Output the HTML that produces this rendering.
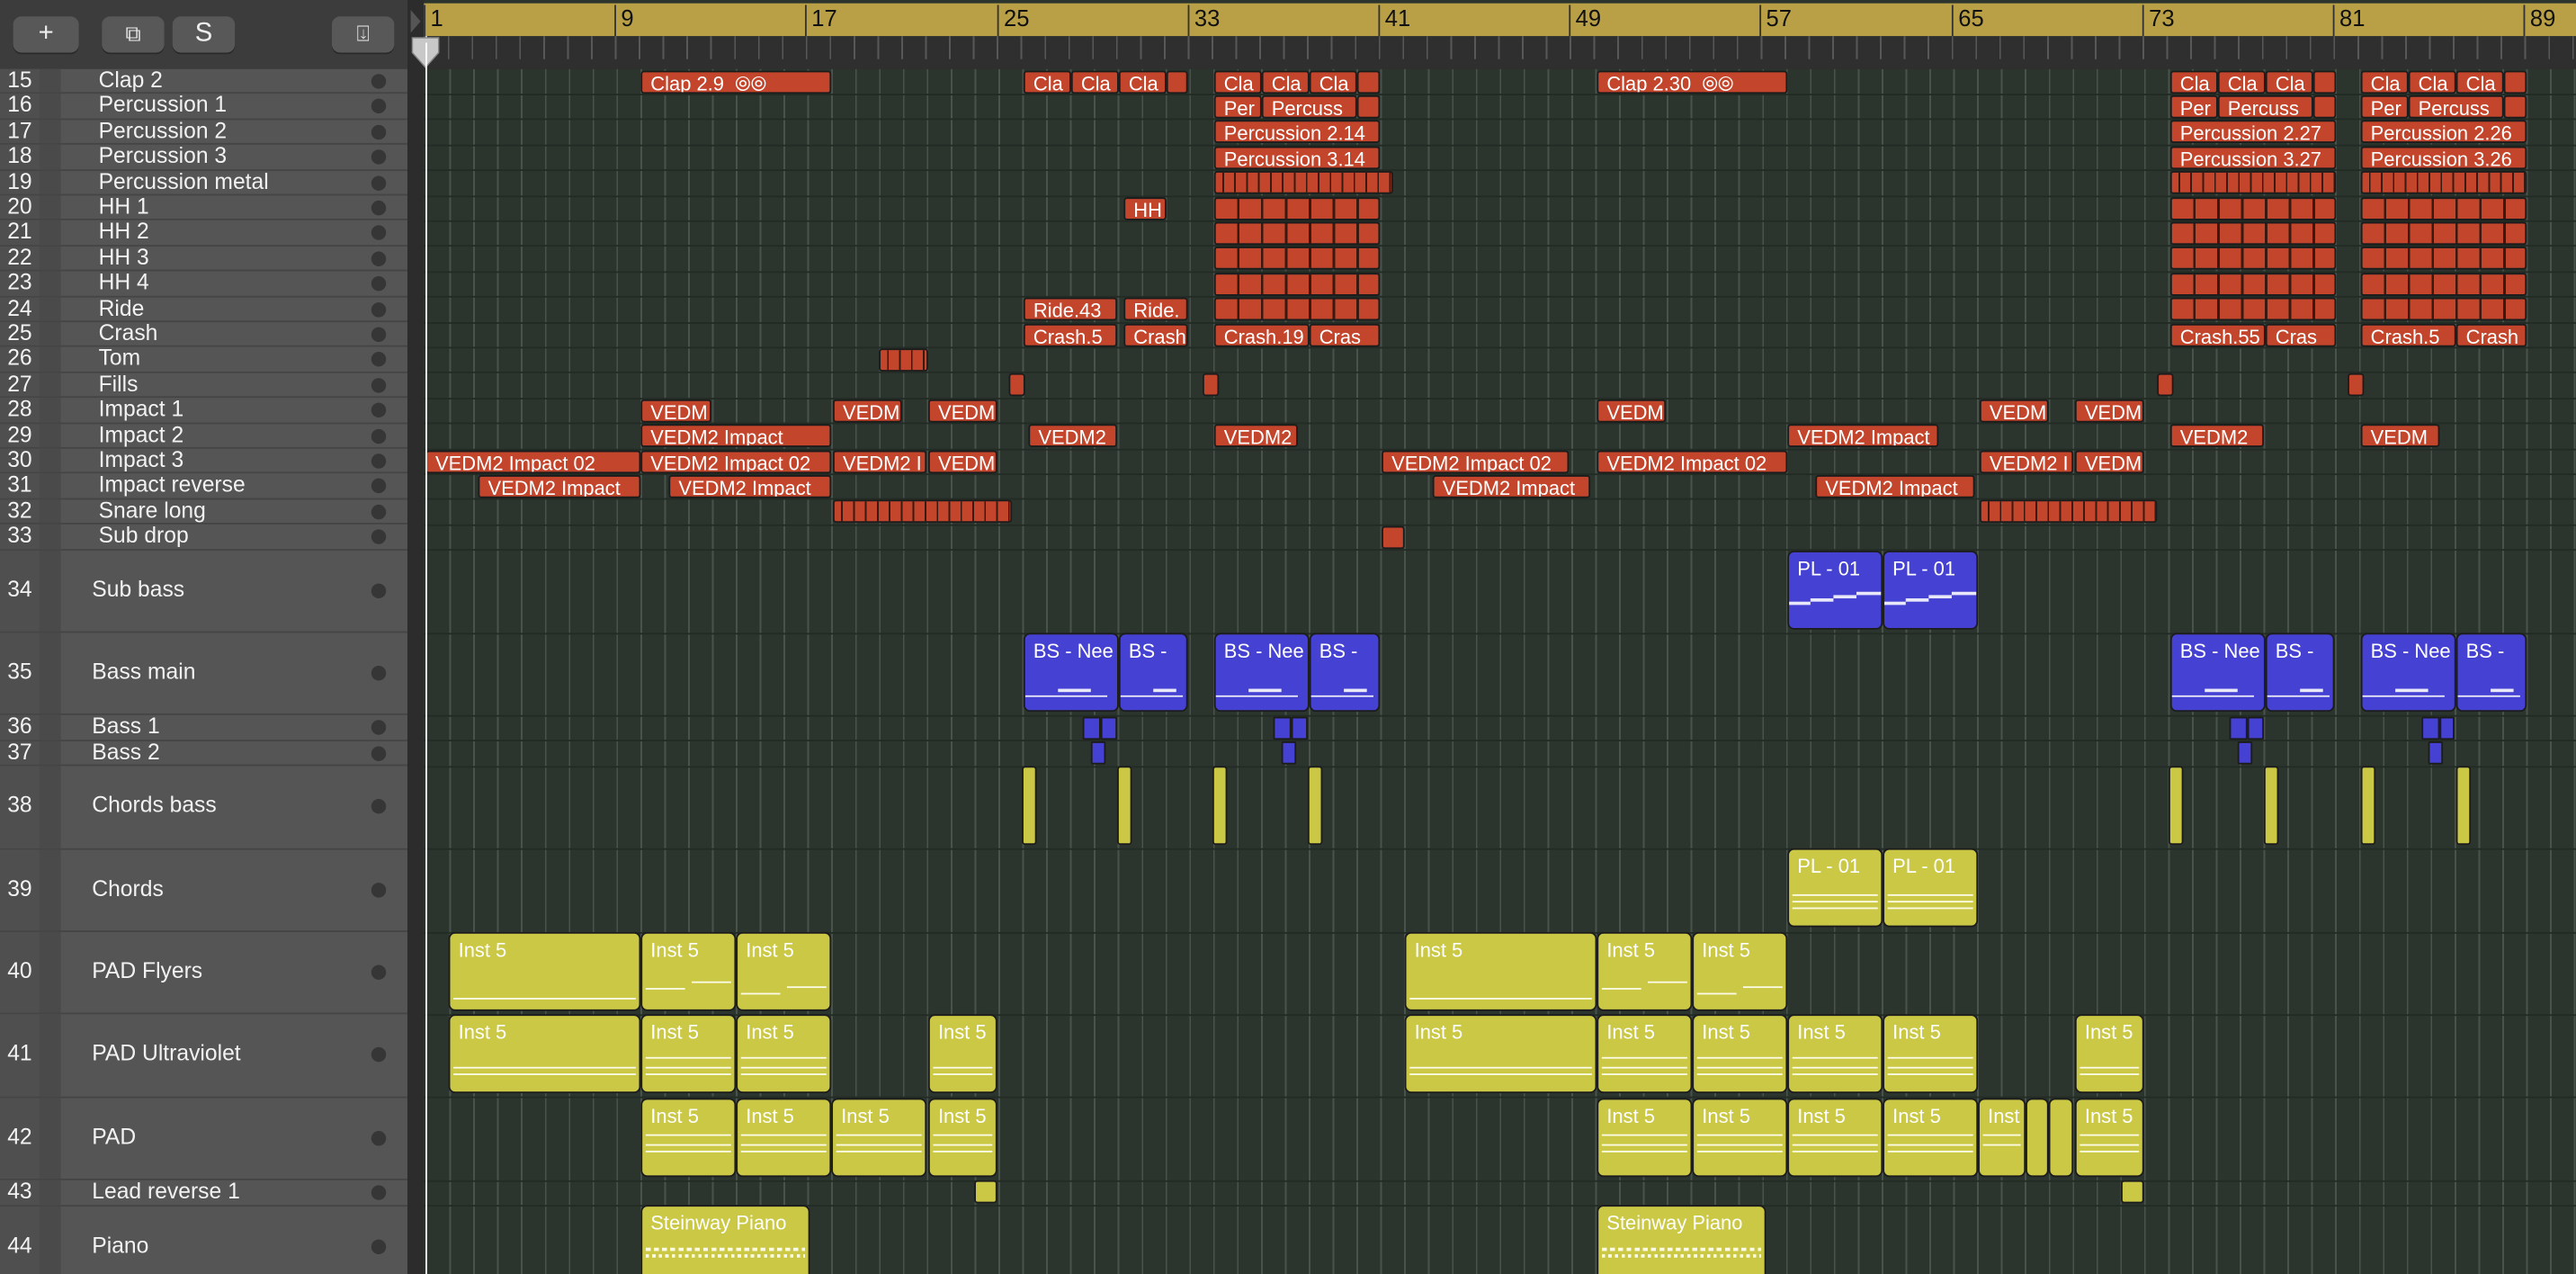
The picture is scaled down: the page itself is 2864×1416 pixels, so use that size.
<!DOCTYPE html>
<html><head><meta charset="utf-8">
<style>
html,body{margin:0;padding:0;background:#2b352e;overflow:hidden}
#w{position:absolute;left:0;top:0;width:1568px;height:775px;transform:scale(1.82653,1.8271);transform-origin:0 0;font-family:"Liberation Sans",sans-serif;overflow:hidden;background:#2b352e}
.a{position:absolute}
.hdr{left:0;top:0;width:258px;height:42px;background:#3c3c3c}
.btn{position:absolute;top:10px;height:22px;background:#585858;border-radius:5px;color:#eee;text-align:center;font-size:16px;line-height:22px;box-shadow:0 1px 0 #2a2a2a}
.gold{left:258px;top:2px;width:1310px;height:20px;background:#b99f45}
.gold span{position:absolute;top:1px;font-size:14px;color:#111;padding-left:3px;border-left:1px solid #333;height:19px;line-height:17px}
.tick{left:258px;top:22px;width:1310px;height:20px;background:#2f2f2f repeating-linear-gradient(90deg,#585858 0 1px,transparent 1px 14.53px);background-size:100% 14px;background-repeat:no-repeat}
.grid{left:258.7px;top:42px;width:1310px;height:740px;background:repeating-linear-gradient(90deg,#48534b 0 1px,transparent 1px 14.53px)}
.tl{left:0;top:42px;width:248px;height:740px;background:#555}
.strip{left:248px;top:0;width:10px;height:775px;background:#2c2c2c}
.row{position:absolute;left:0;width:248px;border-bottom:1px solid #454545;box-sizing:border-box;color:#f2f2f2;font-size:13.5px}
.row .n{position:absolute;left:0;top:0;bottom:0;width:24px;background:#4f4f4f;text-align:center}
.row .g{position:absolute;left:24px;top:0;bottom:0;width:13px;background:#4a4a4a}
.row .t{position:absolute;left:56px}
.row .d{position:absolute;left:226px;width:9px;height:9px;border-radius:50%;background:#363636}
.sep{position:absolute;left:258px;width:1310px;height:1px;background:#222b24}
.r{position:absolute;box-sizing:border-box;border:1px solid #1c1c1c;border-radius:2px;color:#fff;font-size:12px;line-height:12px;padding:1px 0 0 5px;white-space:nowrap;overflow:hidden}
.o{background:#c3452b}
.b{background:#4541d3;border-radius:4px}
.y{background:#cbc845;border-radius:4px}
.s{height:14px}
.L{height:48px;padding-top:4px}
.st{background:#c3452b repeating-linear-gradient(90deg,#c3452b 0 4px,#3a1a10 4px 5px,#c3452b 5px 7.26px)}
.sq{background:repeating-linear-gradient(90deg,#c3452b 0 13px,#3a1a10 13px 14.53px)}
.ml{position:absolute;height:2px;background:#e8e8f8}
.yl{position:absolute;height:2px;background:#fbfbe6;left:2px;right:2px}
</style></head><body><div id="w">
<div class="a grid"></div>
<div class="a hdr"></div>
<div class="btn" style="left:8px;width:40px">+</div>
<div class="btn" style="left:62px;width:38px;font-size:13px">⧉</div>
<div class="btn" style="left:105px;width:38px">S</div>
<div class="btn" style="left:202px;width:38px;font-size:13px">⍗</div>
<div class="a strip"></div>
<div class="a gold">
<span style="left:0">1</span><span style="left:116px">9</span><span style="left:232px">17</span><span style="left:349px">25</span><span style="left:465px">33</span><span style="left:581px">41</span><span style="left:697px">49</span><span style="left:813px">57</span><span style="left:930px">65</span><span style="left:1046px">73</span><span style="left:1162px">81</span><span style="left:1278px">89</span>
</div>
<div class="a tick"></div>
<div class="a tl"></div>

<!-- track list -->
<div class="row" style="top:42px;height:15.4px;line-height:14px"><div class="n">15</div><div class="g"></div><div class="t" style="left:60px">Clap 2</div><div class="d" style="top:3px"></div></div>
<div class="row" style="top:57.4px;height:15.4px;line-height:14px"><div class="n">16</div><div class="g"></div><div class="t" style="left:60px">Percussion 1</div><div class="d" style="top:3px"></div></div>
<div class="row" style="top:72.8px;height:15.4px;line-height:14px"><div class="n">17</div><div class="g"></div><div class="t" style="left:60px">Percussion 2</div><div class="d" style="top:3px"></div></div>
<div class="row" style="top:88.2px;height:15.4px;line-height:14px"><div class="n">18</div><div class="g"></div><div class="t" style="left:60px">Percussion 3</div><div class="d" style="top:3px"></div></div>
<div class="row" style="top:103.6px;height:15.4px;line-height:14px"><div class="n">19</div><div class="g"></div><div class="t" style="left:60px">Percussion metal</div><div class="d" style="top:3px"></div></div>
<div class="row" style="top:119px;height:15.4px;line-height:14px"><div class="n">20</div><div class="g"></div><div class="t" style="left:60px">HH 1</div><div class="d" style="top:3px"></div></div>
<div class="row" style="top:134.4px;height:15.4px;line-height:14px"><div class="n">21</div><div class="g"></div><div class="t" style="left:60px">HH 2</div><div class="d" style="top:3px"></div></div>
<div class="row" style="top:149.8px;height:15.4px;line-height:14px"><div class="n">22</div><div class="g"></div><div class="t" style="left:60px">HH 3</div><div class="d" style="top:3px"></div></div>
<div class="row" style="top:165.2px;height:15.4px;line-height:14px"><div class="n">23</div><div class="g"></div><div class="t" style="left:60px">HH 4</div><div class="d" style="top:3px"></div></div>
<div class="row" style="top:180.6px;height:15.4px;line-height:14px"><div class="n">24</div><div class="g"></div><div class="t" style="left:60px">Ride</div><div class="d" style="top:3px"></div></div>
<div class="row" style="top:196px;height:15.4px;line-height:14px"><div class="n">25</div><div class="g"></div><div class="t" style="left:60px">Crash</div><div class="d" style="top:3px"></div></div>
<div class="row" style="top:211.4px;height:15.4px;line-height:14px"><div class="n">26</div><div class="g"></div><div class="t" style="left:60px">Tom</div><div class="d" style="top:3px"></div></div>
<div class="row" style="top:226.8px;height:15.4px;line-height:14px"><div class="n">27</div><div class="g"></div><div class="t" style="left:60px">Fills</div><div class="d" style="top:3px"></div></div>
<div class="row" style="top:242.2px;height:15.4px;line-height:14px"><div class="n">28</div><div class="g"></div><div class="t" style="left:60px">Impact 1</div><div class="d" style="top:3px"></div></div>
<div class="row" style="top:257.6px;height:15.4px;line-height:14px"><div class="n">29</div><div class="g"></div><div class="t" style="left:60px">Impact 2</div><div class="d" style="top:3px"></div></div>
<div class="row" style="top:273px;height:15.4px;line-height:14px"><div class="n">30</div><div class="g"></div><div class="t" style="left:60px">Impact 3</div><div class="d" style="top:3px"></div></div>
<div class="row" style="top:288.4px;height:15.4px;line-height:14px"><div class="n">31</div><div class="g"></div><div class="t" style="left:60px">Impact reverse</div><div class="d" style="top:3px"></div></div>
<div class="row" style="top:303.8px;height:15.4px;line-height:14px"><div class="n">32</div><div class="g"></div><div class="t" style="left:60px">Snare long</div><div class="d" style="top:3px"></div></div>
<div class="row" style="top:319.2px;height:15.4px;line-height:14px"><div class="n">33</div><div class="g"></div><div class="t" style="left:60px">Sub drop</div><div class="d" style="top:3px"></div></div>
<div class="row" style="top:334.6px;height:50.4px;line-height:48px"><div class="n">34</div><div class="g"></div><div class="t">Sub bass</div><div class="d" style="top:20px"></div></div>
<div class="row" style="top:385px;height:50.4px;line-height:48px"><div class="n">35</div><div class="g"></div><div class="t">Bass main</div><div class="d" style="top:20px"></div></div>
<div class="row" style="top:435.4px;height:15.4px;line-height:14px"><div class="n">36</div><div class="g"></div><div class="t">Bass 1</div><div class="d" style="top:3px"></div></div>
<div class="row" style="top:450.8px;height:15.4px;line-height:14px"><div class="n">37</div><div class="g"></div><div class="t">Bass 2</div><div class="d" style="top:3px"></div></div>
<div class="row" style="top:466.2px;height:50.4px;line-height:48px"><div class="n">38</div><div class="g"></div><div class="t">Chords bass</div><div class="d" style="top:20px"></div></div>
<div class="row" style="top:516.6px;height:50.4px;line-height:48px"><div class="n">39</div><div class="g"></div><div class="t">Chords</div><div class="d" style="top:20px"></div></div>
<div class="row" style="top:567px;height:50.4px;line-height:48px"><div class="n">40</div><div class="g"></div><div class="t">PAD Flyers</div><div class="d" style="top:20px"></div></div>
<div class="row" style="top:617.4px;height:50.4px;line-height:48px"><div class="n">41</div><div class="g"></div><div class="t">PAD Ultraviolet</div><div class="d" style="top:20px"></div></div>
<div class="row" style="top:667.8px;height:50.4px;line-height:48px"><div class="n">42</div><div class="g"></div><div class="t">PAD</div><div class="d" style="top:20px"></div></div>
<div class="row" style="top:718.2px;height:15.4px;line-height:14px"><div class="n">43</div><div class="g"></div><div class="t">Lead reverse 1</div><div class="d" style="top:3px"></div></div>
<div class="row" style="top:733.6px;height:50.4px;line-height:48px"><div class="n">44</div><div class="g"></div><div class="t">Piano</div><div class="d" style="top:20px"></div></div>

<!-- row separators in arrange -->
<div class="sep" style="top:57px"></div><div class="sep" style="top:72.4px"></div><div class="sep" style="top:87.8px"></div><div class="sep" style="top:103.2px"></div><div class="sep" style="top:118.6px"></div><div class="sep" style="top:134px"></div><div class="sep" style="top:149.4px"></div><div class="sep" style="top:164.8px"></div><div class="sep" style="top:180.2px"></div><div class="sep" style="top:195.6px"></div><div class="sep" style="top:211px"></div><div class="sep" style="top:226.4px"></div><div class="sep" style="top:241.8px"></div><div class="sep" style="top:257.2px"></div><div class="sep" style="top:272.6px"></div><div class="sep" style="top:288px"></div><div class="sep" style="top:303.4px"></div><div class="sep" style="top:318.8px"></div><div class="sep" style="top:334.2px"></div><div class="sep" style="top:384.6px"></div><div class="sep" style="top:435px"></div><div class="sep" style="top:450.4px"></div><div class="sep" style="top:465.8px"></div><div class="sep" style="top:516.2px"></div><div class="sep" style="top:566.6px"></div><div class="sep" style="top:617px"></div><div class="sep" style="top:667.4px"></div><div class="sep" style="top:717.8px"></div><div class="sep" style="top:733.2px"></div>

<!-- row 15 -->
<div class="r o s" style="left:390px;top:42.5px;width:116px">Clap 2.9 &nbsp;⦾⦾</div>
<div class="r o s" style="left:623px;top:42.5px;width:29px">Cla</div><div class="r o s" style="left:652px;top:42.5px;width:29px">Cla</div><div class="r o s" style="left:681px;top:42.5px;width:29px">Cla</div><div class="r o s" style="left:710px;top:42.5px;width:13px"></div>
<div class="r o s" style="left:739px;top:42.5px;width:29px">Cla</div><div class="r o s" style="left:768px;top:42.5px;width:29px">Cla</div><div class="r o s" style="left:797px;top:42.5px;width:29px">Cla</div><div class="r o s" style="left:826px;top:42.5px;width:14px"></div>
<div class="r o s" style="left:972px;top:42.5px;width:116px">Clap 2.30 &nbsp;⦾⦾</div>
<div class="r o s" style="left:1321px;top:42.5px;width:29px">Cla</div><div class="r o s" style="left:1350px;top:42.5px;width:29px">Cla</div><div class="r o s" style="left:1379px;top:42.5px;width:29px">Cla</div><div class="r o s" style="left:1408px;top:42.5px;width:14px"></div>
<div class="r o s" style="left:1437px;top:42.5px;width:29px">Cla</div><div class="r o s" style="left:1466px;top:42.5px;width:29px">Cla</div><div class="r o s" style="left:1495px;top:42.5px;width:29px">Cla</div><div class="r o s" style="left:1524px;top:42.5px;width:14px"></div>
<!-- row 16 -->
<div class="r o s" style="left:739px;top:58px;width:29px">Per</div><div class="r o s" style="left:768px;top:58px;width:58px">Percuss</div><div class="r o s" style="left:826px;top:58px;width:14px"></div>
<div class="r o s" style="left:1321px;top:58px;width:29px">Per</div><div class="r o s" style="left:1350px;top:58px;width:58px">Percuss</div><div class="r o s" style="left:1408px;top:58px;width:14px"></div>
<div class="r o s" style="left:1437px;top:58px;width:29px">Per</div><div class="r o s" style="left:1466px;top:58px;width:58px">Percuss</div><div class="r o s" style="left:1524px;top:58px;width:14px"></div>
<!-- row 17/18 -->
<div class="r o s" style="left:739px;top:73.4px;width:101px">Percussion 2.14</div><div class="r o s" style="left:1321px;top:73.4px;width:101px">Percussion 2.27</div><div class="r o s" style="left:1437px;top:73.4px;width:101px">Percussion 2.26</div>
<div class="r o s" style="left:739px;top:88.8px;width:101px">Percussion 3.14</div><div class="r o s" style="left:1321px;top:88.8px;width:101px">Percussion 3.27</div><div class="r o s" style="left:1437px;top:88.8px;width:101px">Percussion 3.26</div>
<!-- row 19 -->
<div class="r st s" style="left:739px;top:104.2px;width:109px"></div><div class="r st s" style="left:1321px;top:104.2px;width:101px"></div><div class="r st s" style="left:1437px;top:104.2px;width:101px"></div>
<!-- row 20-24 squares -->
<div class="r o s" style="left:684px;top:119.6px;width:26px">HH</div>
<div class="r sq s" style="left:739px;top:119.6px;width:101px"></div><div class="r sq s" style="left:1321px;top:119.6px;width:101px"></div><div class="r sq s" style="left:1437px;top:119.6px;width:101px"></div>
<div class="r sq s" style="left:739px;top:135px;width:101px"></div><div class="r sq s" style="left:1321px;top:135px;width:101px"></div><div class="r sq s" style="left:1437px;top:135px;width:101px"></div>
<div class="r sq s" style="left:739px;top:150.4px;width:101px"></div><div class="r sq s" style="left:1321px;top:150.4px;width:101px"></div><div class="r sq s" style="left:1437px;top:150.4px;width:101px"></div>
<div class="r sq s" style="left:739px;top:165.8px;width:101px"></div><div class="r sq s" style="left:1321px;top:165.8px;width:101px"></div><div class="r sq s" style="left:1437px;top:165.8px;width:101px"></div>
<div class="r o s" style="left:623px;top:181.2px;width:57px">Ride.43</div><div class="r o s" style="left:684px;top:181.2px;width:39px">Ride.</div>
<div class="r sq s" style="left:739px;top:181.2px;width:101px"></div><div class="r sq s" style="left:1321px;top:181.2px;width:101px"></div><div class="r sq s" style="left:1437px;top:181.2px;width:101px"></div>
<!-- row 25 -->
<div class="r o s" style="left:623px;top:196.6px;width:57px">Crash.5</div><div class="r o s" style="left:684px;top:196.6px;width:39px">Crash</div>
<div class="r o s" style="left:739px;top:196.6px;width:58px">Crash.19</div><div class="r o s" style="left:797px;top:196.6px;width:43px">Cras</div>
<div class="r o s" style="left:1321px;top:196.6px;width:58px">Crash.55</div><div class="r o s" style="left:1379px;top:196.6px;width:43px">Cras</div>
<div class="r o s" style="left:1437px;top:196.6px;width:58px">Crash.5</div><div class="r o s" style="left:1495px;top:196.6px;width:43px">Crash</div>
<!-- row 26/27 -->
<div class="r st s" style="left:535px;top:212px;width:30px"></div>
<div class="r o s" style="left:614px;top:227.4px;width:10px"></div><div class="r o s" style="left:732px;top:227.4px;width:10px"></div><div class="r o s" style="left:1313px;top:227.4px;width:10px"></div><div class="r o s" style="left:1429px;top:227.4px;width:10px"></div>
<!-- row 28 -->
<div class="r o s" style="left:390px;top:242.8px;width:43px">VEDM</div><div class="r o s" style="left:507px;top:242.8px;width:42px">VEDM</div><div class="r o s" style="left:565px;top:242.8px;width:42px">VEDM</div><div class="r o s" style="left:972px;top:242.8px;width:42px">VEDM</div><div class="r o s" style="left:1205px;top:242.8px;width:42px">VEDM</div><div class="r o s" style="left:1263px;top:242.8px;width:42px">VEDM</div>
<!-- row 29 -->
<div class="r o s" style="left:390px;top:258.2px;width:116px">VEDM2 Impact</div><div class="r o s" style="left:626px;top:258.2px;width:54px">VEDM2</div><div class="r o s" style="left:739px;top:258.2px;width:51px">VEDM2</div><div class="r o s" style="left:1088px;top:258.2px;width:92px">VEDM2 Impact</div><div class="r o s" style="left:1321px;top:258.2px;width:57px">VEDM2</div><div class="r o s" style="left:1437px;top:258.2px;width:48px">VEDM</div>
<!-- row 30 -->
<div class="r o s" style="left:259px;top:273.6px;width:131px">VEDM2 Impact 02</div><div class="r o s" style="left:390px;top:273.6px;width:116px">VEDM2 Impact 02</div><div class="r o s" style="left:507px;top:273.6px;width:57px">VEDM2 I</div><div class="r o s" style="left:565px;top:273.6px;width:42px">VEDM</div><div class="r o s" style="left:841px;top:273.6px;width:114px">VEDM2 Impact 02</div><div class="r o s" style="left:972px;top:273.6px;width:116px">VEDM2 Impact 02</div><div class="r o s" style="left:1205px;top:273.6px;width:57px">VEDM2 I</div><div class="r o s" style="left:1263px;top:273.6px;width:42px">VEDM</div>
<!-- row 31 -->
<div class="r o s" style="left:291px;top:289px;width:99px">VEDM2 Impact</div><div class="r o s" style="left:407px;top:289px;width:99px">VEDM2 Impact</div><div class="r o s" style="left:872px;top:289px;width:96px">VEDM2 Impact</div><div class="r o s" style="left:1105px;top:289px;width:97px">VEDM2 Impact</div>
<!-- row 32/33 -->
<div class="r st s" style="left:507px;top:304.4px;width:109px"></div><div class="r st s" style="left:1205px;top:304.4px;width:108px"></div>
<div class="r o s" style="left:841px;top:319.8px;width:14px"></div>

<!-- row 34 -->
<div class="r b L" style="left:1088px;top:335px;width:58px">PL - 01<div class="ml" style="left:0;top:30px;width:13px"></div><div class="ml" style="left:13px;top:28px;width:14px"></div><div class="ml" style="left:27px;top:26px;width:14px"></div><div class="ml" style="left:41px;top:24px;width:15px"></div></div>
<div class="r b L" style="left:1146px;top:335px;width:58px">PL - 01<div class="ml" style="left:0;top:30px;width:13px"></div><div class="ml" style="left:13px;top:28px;width:14px"></div><div class="ml" style="left:27px;top:26px;width:14px"></div><div class="ml" style="left:41px;top:24px;width:15px"></div></div>
<!-- row 35 -->
<div class="r b L" style="left:623px;top:385.4px;width:58px">BS - Nee<div class="ml" style="left:0;top:37px;width:50px;height:1px"></div><div class="ml" style="left:20px;top:33px;width:20px;height:2px"></div></div>
<div class="r b L" style="left:681px;top:385.4px;width:42px">BS -<div class="ml" style="left:0;top:37px;width:38px;height:1px"></div><div class="ml" style="left:20px;top:33px;width:14px"></div></div>
<div class="r b L" style="left:739px;top:385.4px;width:58px">BS - Nee<div class="ml" style="left:0;top:37px;width:50px;height:1px"></div><div class="ml" style="left:20px;top:33px;width:20px"></div></div>
<div class="r b L" style="left:797px;top:385.4px;width:43px">BS -<div class="ml" style="left:0;top:37px;width:38px;height:1px"></div><div class="ml" style="left:20px;top:33px;width:14px"></div></div>
<div class="r b L" style="left:1321px;top:385.4px;width:58px">BS - Nee<div class="ml" style="left:0;top:37px;width:50px;height:1px"></div><div class="ml" style="left:20px;top:33px;width:20px"></div></div>
<div class="r b L" style="left:1379px;top:385.4px;width:42px">BS -<div class="ml" style="left:0;top:37px;width:38px;height:1px"></div><div class="ml" style="left:20px;top:33px;width:14px"></div></div>
<div class="r b L" style="left:1437px;top:385.4px;width:58px">BS - Nee<div class="ml" style="left:0;top:37px;width:50px;height:1px"></div><div class="ml" style="left:20px;top:33px;width:20px"></div></div>
<div class="r b L" style="left:1495px;top:385.4px;width:43px">BS -<div class="ml" style="left:0;top:37px;width:38px;height:1px"></div><div class="ml" style="left:20px;top:33px;width:14px"></div></div>
<!-- row 36/37 -->
<div class="r b s" style="left:659px;top:435.6px;width:11px;border-radius:1px"></div><div class="r b s" style="left:670px;top:435.6px;width:10px;border-radius:1px"></div>
<div class="r b s" style="left:775px;top:435.6px;width:11px;border-radius:1px"></div><div class="r b s" style="left:786px;top:435.6px;width:10px;border-radius:1px"></div>
<div class="r b s" style="left:1357px;top:435.6px;width:11px;border-radius:1px"></div><div class="r b s" style="left:1368px;top:435.6px;width:10px;border-radius:1px"></div>
<div class="r b s" style="left:1474px;top:435.6px;width:11px;border-radius:1px"></div><div class="r b s" style="left:1485px;top:435.6px;width:9px;border-radius:1px"></div>
<div class="r b s" style="left:664px;top:451px;width:9px;border-radius:1px"></div><div class="r b s" style="left:780px;top:451px;width:9px;border-radius:1px"></div><div class="r b s" style="left:1362px;top:451px;width:9px;border-radius:1px"></div><div class="r b s" style="left:1478px;top:451px;width:9px;border-radius:1px"></div>
<!-- row 38 -->
<div class="r y L" style="left:622px;top:465.5px;width:9px;border-radius:2px"></div><div class="r y L" style="left:680px;top:465.5px;width:9px;border-radius:2px"></div><div class="r y L" style="left:738px;top:465.5px;width:9px;border-radius:2px"></div><div class="r y L" style="left:796px;top:465.5px;width:9px;border-radius:2px"></div>
<div class="r y L" style="left:1320px;top:465.5px;width:9px;border-radius:2px"></div><div class="r y L" style="left:1378px;top:465.5px;width:9px;border-radius:2px"></div><div class="r y L" style="left:1437px;top:465.5px;width:9px;border-radius:2px"></div><div class="r y L" style="left:1495px;top:465.5px;width:9px;border-radius:2px"></div>
<!-- row 39 -->
<div class="r y L" style="left:1088px;top:516.4px;width:58px">PL - 01<div class="yl" style="top:27px;height:1px"></div><div class="yl" style="top:31px;height:1px"></div><div class="yl" style="top:35px;height:1px"></div></div>
<div class="r y L" style="left:1146px;top:516.4px;width:58px">PL - 01<div class="yl" style="top:27px;height:1px"></div><div class="yl" style="top:31px;height:1px"></div><div class="yl" style="top:35px;height:1px"></div></div>
<!-- row 40 -->
<div class="r y L" style="left:273px;top:566.8px;width:117px">Inst 5<div class="yl" style="top:39px;height:1px"></div></div>
<div class="r y L" style="left:390px;top:566.8px;width:58px">Inst 5<div class="yl" style="top:33px;height:1px;right:30px"></div><div class="yl" style="top:29px;height:1px;left:30px"></div></div>
<div class="r y L" style="left:448px;top:566.8px;width:58px">Inst 5<div class="yl" style="top:36px;height:1px;right:30px"></div><div class="yl" style="top:32px;height:1px;left:30px"></div></div>
<div class="r y L" style="left:855px;top:566.8px;width:117px">Inst 5<div class="yl" style="top:39px;height:1px"></div></div>
<div class="r y L" style="left:972px;top:566.8px;width:58px">Inst 5<div class="yl" style="top:33px;height:1px;right:30px"></div><div class="yl" style="top:29px;height:1px;left:30px"></div></div>
<div class="r y L" style="left:1030px;top:566.8px;width:58px">Inst 5<div class="yl" style="top:36px;height:1px;right:30px"></div><div class="yl" style="top:32px;height:1px;left:30px"></div></div>
<!-- row 41 -->
<div class="r y L" style="left:273px;top:617.2px;width:117px">Inst 5<div class="yl" style="top:31px;height:1px"></div><div class="yl" style="top:35px;height:1px"></div></div>
<div class="r y L" style="left:390px;top:617.2px;width:58px">Inst 5<div class="yl" style="top:25px;height:1px"></div><div class="yl" style="top:31px;height:1px"></div><div class="yl" style="top:35px;height:1px"></div></div>
<div class="r y L" style="left:448px;top:617.2px;width:58px">Inst 5<div class="yl" style="top:25px;height:1px"></div><div class="yl" style="top:31px;height:1px"></div><div class="yl" style="top:35px;height:1px"></div></div>
<div class="r y L" style="left:565px;top:617.2px;width:42px">Inst 5<div class="yl" style="top:31px;height:1px"></div><div class="yl" style="top:35px;height:1px"></div></div>
<div class="r y L" style="left:855px;top:617.2px;width:117px">Inst 5<div class="yl" style="top:31px;height:1px"></div><div class="yl" style="top:35px;height:1px"></div></div>
<div class="r y L" style="left:972px;top:617.2px;width:58px">Inst 5<div class="yl" style="top:25px;height:1px"></div><div class="yl" style="top:31px;height:1px"></div><div class="yl" style="top:35px;height:1px"></div></div>
<div class="r y L" style="left:1030px;top:617.2px;width:58px">Inst 5<div class="yl" style="top:25px;height:1px"></div><div class="yl" style="top:31px;height:1px"></div><div class="yl" style="top:35px;height:1px"></div></div>
<div class="r y L" style="left:1088px;top:617.2px;width:58px">Inst 5<div class="yl" style="top:25px;height:1px"></div><div class="yl" style="top:31px;height:1px"></div><div class="yl" style="top:35px;height:1px"></div></div>
<div class="r y L" style="left:1146px;top:617.2px;width:58px">Inst 5<div class="yl" style="top:25px;height:1px"></div><div class="yl" style="top:31px;height:1px"></div><div class="yl" style="top:35px;height:1px"></div></div>
<div class="r y L" style="left:1263px;top:617.2px;width:42px">Inst 5<div class="yl" style="top:31px;height:1px"></div><div class="yl" style="top:35px;height:1px"></div></div>
<!-- row 42 -->
<div class="r y L" style="left:390px;top:667.6px;width:58px">Inst 5<div class="yl" style="top:21px;height:1px"></div><div class="yl" style="top:27px;height:1px"></div><div class="yl" style="top:31px;height:1px"></div></div>
<div class="r y L" style="left:448px;top:667.6px;width:58px">Inst 5<div class="yl" style="top:21px;height:1px"></div><div class="yl" style="top:27px;height:1px"></div><div class="yl" style="top:31px;height:1px"></div></div>
<div class="r y L" style="left:506px;top:667.6px;width:58px">Inst 5<div class="yl" style="top:21px;height:1px"></div><div class="yl" style="top:27px;height:1px"></div><div class="yl" style="top:31px;height:1px"></div></div>
<div class="r y L" style="left:565px;top:667.6px;width:42px">Inst 5<div class="yl" style="top:21px;height:1px"></div><div class="yl" style="top:27px;height:1px"></div><div class="yl" style="top:31px;height:1px"></div></div>
<div class="r y L" style="left:972px;top:667.6px;width:58px">Inst 5<div class="yl" style="top:21px;height:1px"></div><div class="yl" style="top:27px;height:1px"></div><div class="yl" style="top:31px;height:1px"></div></div>
<div class="r y L" style="left:1030px;top:667.6px;width:58px">Inst 5<div class="yl" style="top:21px;height:1px"></div><div class="yl" style="top:27px;height:1px"></div><div class="yl" style="top:31px;height:1px"></div></div>
<div class="r y L" style="left:1088px;top:667.6px;width:58px">Inst 5<div class="yl" style="top:21px;height:1px"></div><div class="yl" style="top:27px;height:1px"></div><div class="yl" style="top:31px;height:1px"></div></div>
<div class="r y L" style="left:1146px;top:667.6px;width:58px">Inst 5<div class="yl" style="top:21px;height:1px"></div><div class="yl" style="top:27px;height:1px"></div><div class="yl" style="top:31px;height:1px"></div></div>
<div class="r y L" style="left:1204px;top:667.6px;width:29px">Inst<div class="yl" style="top:21px;height:1px"></div><div class="yl" style="top:27px;height:1px"></div></div>
<div class="r y L" style="left:1233px;top:667.6px;width:14px"></div><div class="r y L" style="left:1247px;top:667.6px;width:15px"></div>
<div class="r y L" style="left:1263px;top:667.6px;width:42px">Inst 5<div class="yl" style="top:21px;height:1px"></div><div class="yl" style="top:27px;height:1px"></div><div class="yl" style="top:31px;height:1px"></div></div>
<!-- row 43 -->
<div class="r y s" style="left:593px;top:718.4px;width:14px;border-radius:2px"></div><div class="r y s" style="left:1291px;top:718.4px;width:14px;border-radius:2px"></div>
<!-- row 44 -->
<div class="r y L" style="left:390px;top:733.4px;width:103px">Steinway Piano<div class="yl" style="top:25px;height:2px;background:repeating-linear-gradient(90deg,#fbfbe6 0 3px,transparent 3px 5px)"></div><div class="yl" style="top:29px;height:2px;background:repeating-linear-gradient(90deg,#fbfbe6 0 2px,transparent 2px 4px)"></div></div>
<div class="r y L" style="left:972px;top:733.4px;width:103px">Steinway Piano<div class="yl" style="top:25px;height:2px;background:repeating-linear-gradient(90deg,#fbfbe6 0 3px,transparent 3px 5px)"></div><div class="yl" style="top:29px;height:2px;background:repeating-linear-gradient(90deg,#fbfbe6 0 2px,transparent 2px 4px)"></div></div>

<!-- playhead -->
<div class="a" style="left:259px;top:22px;width:1px;height:760px;background:#f4f4f4"></div>
<svg class="a" style="left:250px;top:22px" width="18" height="20"><path d="M1 1 H17 V10 L9 19 L1 10 Z" fill="#c8c8c8" stroke="#888" stroke-width="0.8"/><line x1="9.5" y1="4" x2="9.5" y2="20" stroke="#fff"/></svg>
<svg class="a" style="left:249px;top:5px" width="8" height="16"><path d="M1 1 L7 8 L1 15 Z" fill="#555"/></svg>
</div></body></html>
